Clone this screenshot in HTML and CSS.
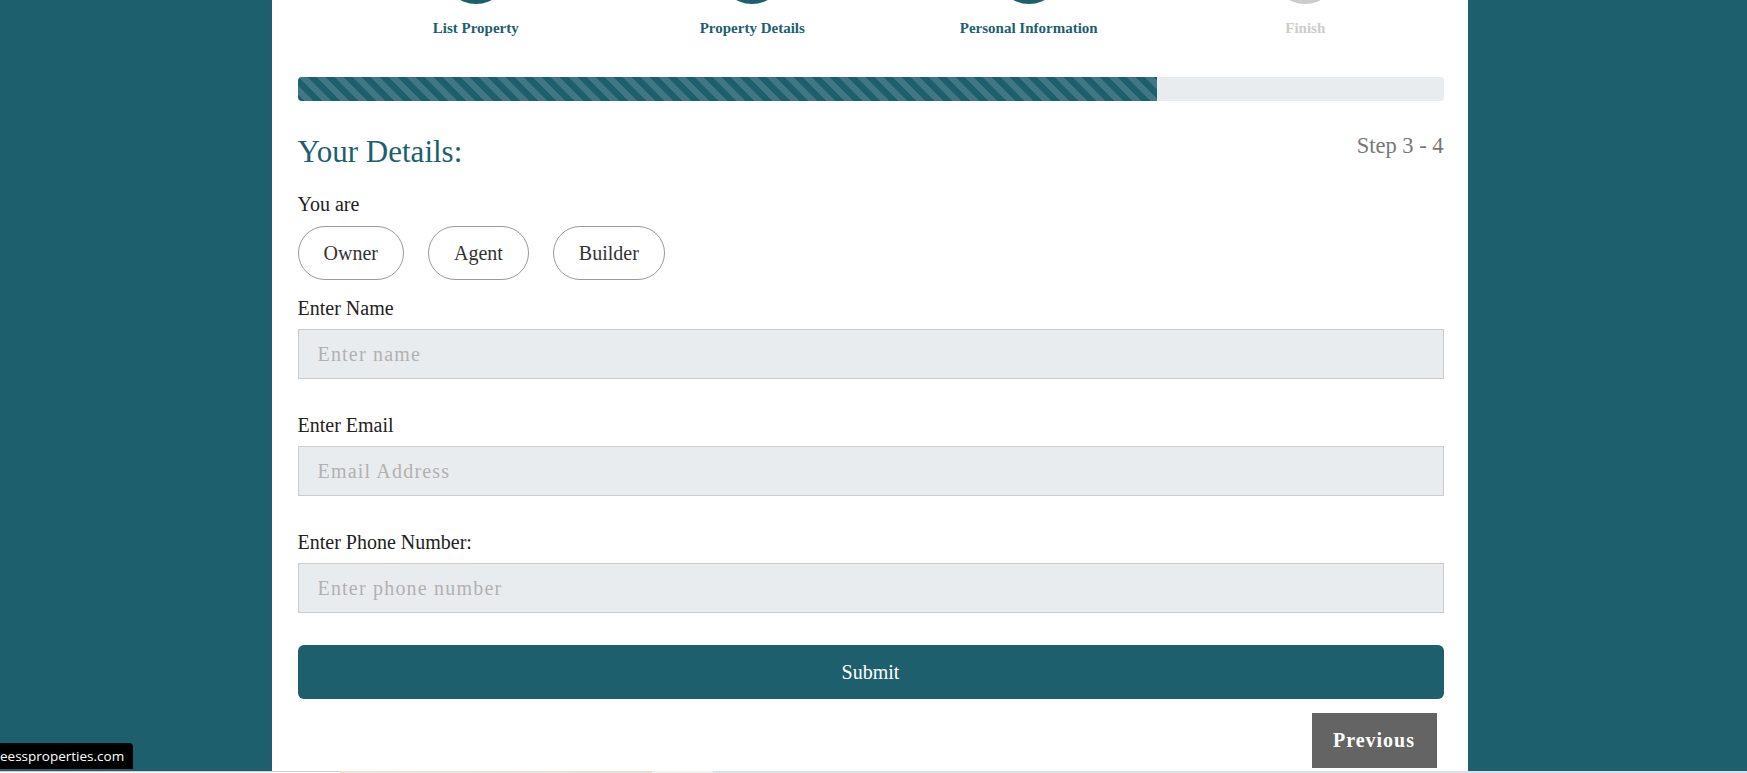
FILE: index.html
```html
<!DOCTYPE html>
<html lang="en">
<head>
<meta charset="utf-8">
<title>List Property - Your Details</title>
<link rel="stylesheet" href="styles.css">
</head>
<body>
<div class="page">
  <main class="card">
    <ol class="steps">
      <li class="step done"><span class="dot"></span><span class="step-label">List Property</span></li>
      <li class="step done"><span class="dot"></span><span class="step-label">Property Details</span></li>
      <li class="step done"><span class="dot"></span><span class="step-label">Personal Information</span></li>
      <li class="step"><span class="dot"></span><span class="step-label">Finish</span></li>
    </ol>
    <div class="progress"><div class="progress-bar" style="width:75%"></div></div>
    <div class="form-head">
      <h2 class="form-title">Your Details:</h2>
      <span class="step-count">Step 3 - 4</span>
    </div>
    <form class="details">
      <p class="label">You are</p>
      <div class="roles">
        <button type="button" class="role">Owner</button>
        <button type="button" class="role">Agent</button>
        <button type="button" class="role">Builder</button>
      </div>
      <div class="field">
        <label class="label" for="name">Enter Name</label>
        <input class="input" id="name" type="text" placeholder="Enter name">
      </div>
      <div class="field">
        <label class="label" for="email">Enter Email</label>
        <input class="input" id="email" type="email" placeholder="Email Address">
      </div>
      <div class="field">
        <label class="label" for="phone">Enter Phone Number:</label>
        <input class="input" id="phone" type="tel" placeholder="Enter phone number">
      </div>
      <button type="button" class="submit">Submit</button>
      <div class="nav"><button type="button" class="prev">Previous</button></div>
    </form>
  </main>
  <div class="top-shade"></div>
</div>
<div class="strip">
  <span class="seg seg-white"></span>
  <span class="seg seg-beige"></span>
  <span class="seg seg-light"></span>
  <span class="seg seg-blue"></span>
</div>
<div class="status">eessproperties.com</div>
</body>
</html>
```
FILE: styles.css
```css
html, body {
  margin: 0;
  padding: 0;
  height: 100%;
  overflow: hidden;
}

body {
  background: #1e5f6e;
  font-family: "Liberation Serif", "Times New Roman", serif;
  color: #222;
}

.page {
  position: relative;
  padding-left: 272px;
}

.card {
  position: relative;
  width: 1196px;
  box-sizing: border-box;
  margin-top: -62px;
  padding: 0 24.5px 3px 25.5px;
  background: #fff;
}

.top-shade {
  position: absolute;
  top: 0;
  left: 272px;
  width: 1196px;
  height: 26px;
  background: linear-gradient(rgba(0, 0, 0, 0.06), rgba(0, 0, 0, 0));
  pointer-events: none;
}

/* Steps */
.steps {
  list-style: none;
  margin: 0;
  padding: 0 0 0 40px;
  display: grid;
  grid-template-columns: repeat(4, 1fr);
}

.step {
  display: flex;
  flex-direction: column;
  align-items: center;
}

.dot {
  width: 66px;
  height: 66px;
  border-radius: 50%;
  background: #ccc;
}

.step.done .dot {
  background: #1e5f6e;
}

.step-label {
  margin-top: 15px;
  font-size: 15px;
  line-height: 18px;
  font-weight: bold;
  color: #ccc;
}

.step.done .step-label {
  color: #1e5f6e;
}

/* Progress */
.progress {
  margin-top: 40px;
  height: 24px;
  border-radius: 4px;
  background: #e9ecef;
  overflow: hidden;
}

.progress-bar {
  height: 100%;
  background-color: #1e5f6e;
  background-image: linear-gradient(45deg,
    rgba(255, 255, 255, 0.15) 25%, transparent 25%,
    transparent 50%, rgba(255, 255, 255, 0.15) 50%,
    rgba(255, 255, 255, 0.15) 75%, transparent 75%, transparent);
  background-size: 18px 18px;
}

/* Heading */
.form-head {
  margin-top: 31px;
  display: flex;
  justify-content: space-between;
  align-items: flex-start;
}

.form-title {
  margin: 0;
  padding-top: 1px;
  font-size: 31px;
  line-height: 37px;
  font-weight: normal;
  color: #1e5f6e;
}

.step-count {
  padding-top: 1px;
  font-size: 22.5px;
  line-height: 26px;
  color: #777;
}

/* Form */
.details {
  margin: 0;
}

.label {
  display: block;
  margin: 0;
  font-size: 20px;
  line-height: 28px;
  color: #222;
}

.details > .label {
  margin-top: 20px;
}

.roles {
  margin-top: 8px;
  display: flex;
  gap: 24px;
}

.role {
  font-family: inherit;
  font-size: 20px;
  line-height: 24px;
  padding: 14px 25px;
  border: 1px solid #999;
  border-radius: 27px;
  background: #fff;
  color: #333;
}

.field {
  margin-top: 32px;
}

.roles + .field {
  margin-top: 14px;
}

.input {
  display: block;
  margin-top: 7px;
  width: 100%;
  height: 50px;
  box-sizing: border-box;
  padding: 0 19px;
  border: 1px solid #ccc;
  background: #e9ecef;
  font-family: inherit;
  font-size: 20px;
  letter-spacing: 1.2px;
  color: #333;
}

.input::placeholder {
  color: #b1b1b1;
}

.submit {
  display: block;
  margin-top: 32px;
  width: 100%;
  height: 54px;
  border: 0;
  border-radius: 6px;
  background: #1e5f6e;
  color: #fff;
  font-family: inherit;
  font-size: 20px;
}

.nav {
  margin-top: 14px;
  display: flex;
  justify-content: flex-end;
}

.prev {
  margin-right: 7px;
  width: 125px;
  height: 55px;
  border: 0;
  background: #646464;
  color: #fff;
  font-family: inherit;
  font-size: 20px;
  font-weight: bold;
  letter-spacing: 1px;
}

/* Bottom strip (next section peeking in) */
.strip {
  display: flex;
  height: 6px;
}

.seg {
  display: block;
  height: 100%;
}

.seg-white {
  width: 340px;
  background: #fff;
  border-top: 1px solid #cfcfcf;
  box-sizing: border-box;
}

.seg-beige {
  width: 312px;
  background: linear-gradient(90deg, #efe6d2, #e6e1d6);
}

.seg-light {
  width: 61px;
  background: #f1f1ef;
}

.seg-blue {
  flex: 1;
  background: #d8e2e8;
}

/* Browser status bubble */
.status {
  position: fixed;
  left: 0;
  bottom: 4px;
  width: 133px;
  height: 26px;
  box-sizing: border-box;
  background: #000;
  color: #fff;
  border-top-right-radius: 4px;
  font-family: "Open Sans", "Noto Sans", sans-serif;
  font-size: 13.5px;
  line-height: 26px;
  white-space: nowrap;
  overflow: hidden;
}
```
